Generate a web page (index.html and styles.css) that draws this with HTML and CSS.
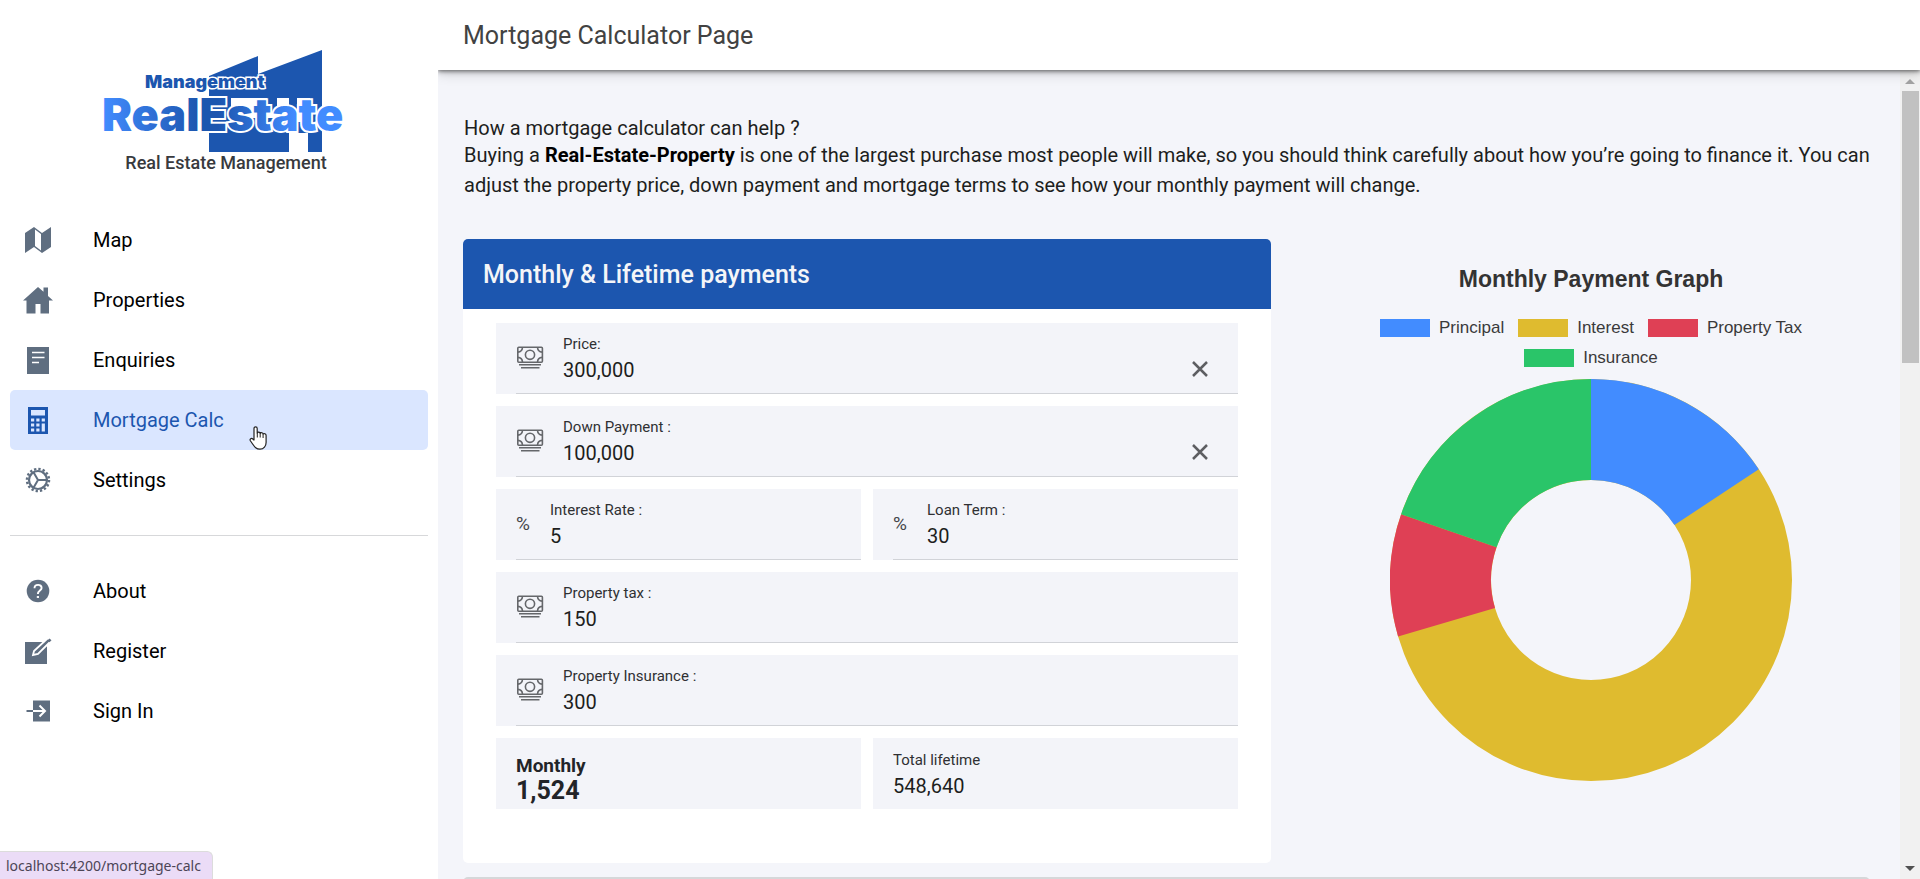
FILE: index.html
```
<!DOCTYPE html>
<html lang="en">
<head>
<meta charset="utf-8">
<title>Mortgage Calculator Page</title>
<link rel="stylesheet" href="styles.css">
</head>
<body>
<svg class="sprite" aria-hidden="true">
  <symbol id="cash" viewBox="0 0 28 24">
    <g fill="none" stroke="currentColor" stroke-width="1.6">
      <rect x="1.8" y="1.3" width="24.6" height="15" rx="1"/>
      <circle cx="14" cy="8.8" r="4.6"/>
      <path d="M6.5 1.5a5 5 0 0 1-4.7 4.6M21.500 1.500a5 5 0 0 0 4.700 4.600M6.500 16a5 5 0 0 0-4.700-4.600M21.500 16a5 5 0 0 1 4.700-4.600M3 18.800h22M5 21.700h18.500"/>
    </g>
  </symbol>
  <symbol id="close" viewBox="0 0 16 16"><path d="M1 1l14 14M15 1L1 15" fill="none" stroke="currentColor" stroke-width="2.500"/></symbol>
</svg>
<div class="app">
  <aside class="sidebar">
    <div class="brand">
      <svg class="logo" viewBox="0 0 250 106" role="img" aria-label="Management RealEstate">
        <defs>
          <linearGradient id="word" x1="0" x2="1"><stop offset="0" stop-color="#428cff"/><stop offset=".4" stop-color="#1c56af"/><stop offset=".48" stop-color="#1c56af"/><stop offset=".8" stop-color="#428cff"/></linearGradient>
        </defs>
        <path fill="#1c56af" d="M108 26L157 6v18L221 0v102h-14V83h-19v19h-80z"/>
        <path fill="#fff" d="M130 48h36v12h-36zM176 48h12v24h-12zM196 48h13v24h-13zM130 64h58v4h-58z"/>
        <text class="logo-small" x="44" y="38">Management</text>
        <text class="logo-big" x="1" y="81" fill="url(#word)">RealEstate</text>
      </svg>
      <p class="brand-name">Real Estate Management</p>
    </div>
    <nav class="nav">
      <a class="nav-item" href="#map"><svg class="nav-icon" viewBox="0 0 30 30"><path d="M2 8l9-6 8 6 9-6v20l-9 6-8-6-9 6z"/><path fill="#fff" d="M12 4.500l6 4.500v16.500L12 21z"/></svg>Map</a>
      <a class="nav-item" href="#properties"><svg class="nav-icon" viewBox="0 0 30 30"><path d="M15 2L0 15.500h3.500V28.500h9V19h5v9.500h8.500V15.500H30l-5-4.600V2.500h-4.500v4.200z"/></svg>Properties</a>
      <a class="nav-item" href="#enquiries"><svg class="nav-icon" viewBox="0 0 30 30"><path d="M4 2h22v27H4z"/><path stroke="#fff" stroke-width="1.700" d="M9 7.500h12.500M9 12.500h12.500M9 17.500h7"/></svg>Enquiries</a>
      <a class="nav-item active" href="#mortgage-calc" aria-current="page"><svg class="nav-icon" viewBox="0 0 30 30"><path d="M5 2h20v27H5z"/><g fill="#dae6ff"><path d="M8 5h14v5.500H8zM8 13.500h3.200v3H8zM13.300 13.500h3.200v3h-3.200zM18.700 13.500h3.200v3h-3.200zM8 18.500h3.200v3H8zM13.300 18.500h3.200v3h-3.200zM8 23.500h3.200v3H8zM13.300 23.500h3.200v3h-3.200zM18.700 18.500h3.200v8h-3.200z"/></g></svg>Mortgage Calc</a>
      <a class="nav-item" href="#settings"><svg class="nav-icon" viewBox="0 0 30 30"><g fill="none" stroke="currentColor"><circle cx="15" cy="15" r="11" stroke-width="2.500" stroke-dasharray="2.300 2.020"/><circle cx="15" cy="15" r="9" stroke-width="2.200"/><path stroke-width="2" d="M15 15h9M15 15l-4.500-7.800M15 15l-4.500 7.800"/></g></svg>Settings</a>
    </nav>
    <nav class="nav nav-account">
      <a class="nav-item" href="#about"><svg class="nav-icon" viewBox="0 0 30 30"><circle cx="15" cy="15" r="11.300"/><g fill="none" stroke="#fff" stroke-width="1.900"><path d="M11.500 12.200c0-4.500 7.200-4.300 7.100-.3 0 2.600-3.700 2.700-3.700 6"/><path d="M13.800 21h2.200"/></g></svg>About</a>
      <a class="nav-item" href="#register"><svg class="nav-icon" viewBox="0 0 30 30"><path d="M2 6h22v22H2z"/><path d="M10 19l1-4L25 2l3 3-13 13z" stroke="#fff" stroke-width="1.800"/><path d="M24.500 4.500l2-2 2 1.800-2 2z"/></svg>Register</a>
      <a class="nav-item" href="#sign-in"><svg class="nav-icon" viewBox="0 0 30 30"><path d="M10 4.500h17v21H10z"/><path d="M3.500 14h6.500v2H3.500z"/><path fill="none" stroke="#fff" stroke-width="2" d="M10 15h12M16.500 9.500L22 15l-5.500 5.500"/></svg>Sign In</a>
    </nav>
    <svg class="pointer" viewBox="0 0 18 24" aria-hidden="true"><path fill="#fff" stroke="#222" stroke-width="1.200" stroke-linejoin="round" d="M5 14V2.500c0-2.300 3.200-2.300 3.200 0V7c.5-1.200 2.800-1 3 .3.700-1 2.700-.6 2.900.6.900-.7 3-.2 3 1.500v7c0 3.500-2.300 6.800-6.100 6.800-4.500 0-5.500-2.700-9.500-8.200-1.300-2 1-3.500 2.500-1.800z"/><path stroke="#222" d="M8.300 7v4.500M11.200 7.500v4M14.100 8v4"/></svg>
  </aside>
  <div class="status">localhost:4200/mortgage-calc</div>

  <div class="page">
    <header class="topbar"><h1 class="topbar-title">Mortgage Calculator Page</h1></header>
    <div class="viewport">
      <main class="content">
        <section class="intro">
          <p class="intro-lead">How a mortgage calculator can help ?</p>
          <p class="intro-body">Buying a <strong>Real-Estate-Property</strong> is one of the largest purchase most people will make, so you should think carefully about how you’re going to finance it. You can adjust the property price, down payment and mortgage terms to see how your monthly payment will change.</p>
        </section>
        <div class="columns">
          <section class="card">
            <h2 class="card-title">Monthly &amp; Lifetime payments</h2>
            <form class="fields">
              <div class="field wide"><svg class="cash"><use href="#cash"/></svg><div class="control"><label for="price">Price:</label><input id="price" value="300,000"></div><button class="clear" type="button" aria-label="Clear price"><svg><use href="#close"/></svg></button></div>
              <div class="field wide"><svg class="cash"><use href="#cash"/></svg><div class="control"><label for="down">Down Payment :</label><input id="down" value="100,000"></div><button class="clear" type="button" aria-label="Clear down payment"><svg><use href="#close"/></svg></button></div>
              <div class="field"><span class="unit">%</span><div class="control"><label for="rate">Interest Rate :</label><input id="rate" value="5"></div></div>
              <div class="field"><span class="unit">%</span><div class="control"><label for="term">Loan Term :</label><input id="term" value="30"></div></div>
              <div class="field wide"><svg class="cash"><use href="#cash"/></svg><div class="control"><label for="tax">Property tax :</label><input id="tax" value="150"></div></div>
              <div class="field wide"><svg class="cash"><use href="#cash"/></svg><div class="control"><label for="insurance">Property Insurance :</label><input id="insurance" value="300"></div></div>
              <div class="field result monthly"><div class="control"><label for="monthly">Monthly</label><output id="monthly">1,524</output></div></div>
              <div class="field result"><div class="control"><label for="lifetime">Total lifetime</label><input id="lifetime" value="548,640" readonly></div></div>
            </form>
          </section>
          <section class="chart">
            <h2 class="chart-title">Monthly Payment Graph</h2>
            <ul class="legend">
              <li><span class="swatch principal"></span>Principal</li>
              <li><span class="swatch interest"></span>Interest</li>
              <li><span class="swatch tax"></span>Property Tax</li>
              <li><span class="swatch insurance"></span>Insurance</li>
            </ul>
            <svg class="donut" viewBox="-201 -201 402 402" role="img" aria-label="Monthly payment breakdown">
              <g fill="none" stroke-width="101">
                <circle class="slice-interest" r="150.500"/>
                <path class="slice-principal" d="M0-150.500A150.500 150.500 0 0 1 125.600-82.850"/>
                <path class="slice-tax" d="M-144.450 42.240A150.500 150.500 0 0 1-142.190-49.320"/>
                <path class="slice-insurance" d="M-142.190-49.320A150.500 150.500 0 0 1 0-150.500"/>
              </g>
            </svg>
          </section>
        </div>
        <section class="next-card"></section>
      </main>
      <div class="scrollbar" aria-hidden="true"><span class="arrow up"></span><span class="thumb"></span><span class="arrow down"></span></div>
    </div>
  </div>
</div>
</body>
</html>
```
FILE: styles.css
```
* { box-sizing: border-box; }
body { margin: 0; font-family: Roboto, "Liberation Sans", sans-serif; font-size: 20px; color: #1d1e20; background: #f4f5fa; }
h1, h2, p, ul { margin: 0; padding: 0; }
.sprite { display: none; }

.app { display: flex; height: 100vh; overflow: hidden; }

.sidebar { position: relative; flex: 0 0 438px; padding: 50px 10px 0; background: #fff; }
.brand { display: flex; flex-direction: column; align-items: center; height: 160px; padding-left: 14px; }
.logo { width: 250px; height: 106px; flex: none; overflow: visible; }
.logo-small { font: 900 18px Inter, sans-serif; fill: #1c56af; stroke: #fff; stroke-width: 3px; paint-order: stroke; }
.logo-big { font: 900 45px Inter, sans-serif; stroke: #fff; stroke-width: 4px; paint-order: stroke; }
.brand-name { font-size: 18px; line-height: 14px; font-weight: 500; color: #383a3e; }

.nav { display: flex; flex-direction: column; }
.nav-account { margin-top: 25px; padding-top: 25px; border-top: 1px solid #d7d8da; }
.nav-item { display: flex; align-items: center; gap: 40px; height: 60px; padding-left: 13px; border-radius: 5px; color: #000; text-decoration: none; }
.nav-item.active { background: #dae6ff; color: #1c56af; }
.nav-icon { width: 30px; height: 30px; fill: currentColor; color: #5f6e80; }
.active .nav-icon { color: #1c56af; }
.pointer { position: absolute; left: 249px; top: 426px; width: 18px; height: 24px; }
.status { position: fixed; left: 0; bottom: 0; padding: 0 11px 0 6px; border: 1px solid #dcdcdc; border-width: 1px 1px 0 0; border-radius: 0 6px 0 0; background: #ebdcf7; color: #4c4556; font: 14px/27px "Noto Sans", "Open Sans", sans-serif; }

.page { flex: 1; min-width: 0; display: flex; flex-direction: column; overflow: hidden; }
.topbar { z-index: 1; flex: 0 0 70px; display: flex; align-items: center; padding: 0 25px; background: #fff; box-shadow: 0 2px 5px rgba(0, 0, 0, .3), 0 4px 12px rgba(0, 0, 0, .14), 0 1px 3px rgba(0, 0, 0, .3); }
.topbar-title { font-size: 25px; font-weight: 400; color: #424242; }
.viewport { flex: 1; min-height: 0; display: flex; }
.content { flex: 1; min-width: 0; padding: 46px 30px 0 25px; overflow: hidden; }

.intro { margin-right: -5px; padding-left: 1px; line-height: 30px; }
.intro-lead { line-height: 24px; }
.intro strong { font-weight: 700; color: #000; }

.columns { display: grid; grid-template-columns: 808fr 599fr; margin-top: 39px; }
.card { border-radius: 5px; overflow: hidden; background: #fff; padding-bottom: 54px; }
.card-title { padding: 1px 20px 0; font-size: 25px; line-height: 69px; font-weight: 500; color: #f4f5f8; background: #1c56af; }
.fields { display: grid; grid-template-columns: 1fr 1fr; gap: 12px; padding: 14px 33px 0; }
.field { display: flex; height: 71px; padding-left: 20px; background: linear-gradient(#d1d3d8, #d1d3d8) 20px 100% / 100% 1px no-repeat #f3f4f9; }
.field.wide { grid-column: 1 / -1; }
.field.result { background: #f3f4f9; }
.cash { width: 28px; height: 24px; margin: 23px 19px 0 0; color: #65676b; }
.unit { margin: 23px 19px 0 0; width: 15px; font-size: 19px; line-height: 24px; color: #45464a; }
.control { flex: 1; min-width: 0; display: flex; flex-direction: column; padding-top: 11px; }
.control label { font-size: 15px; line-height: 20px; color: #2f3033; }
.control input { width: 100%; height: 32px; padding: 0; border: 0; outline: 0; background: none; font: inherit; color: inherit; }
.result .control { padding-top: 12px; }
.monthly .control { padding-top: 15px; font-weight: 700; color: #222428; }
.monthly label { font-size: 19px; line-height: 25px; color: inherit; }
.monthly output { font-size: 25px; line-height: 25px; }
.clear { align-self: flex-start; display: flex; margin: 38px 30px 0 0; padding: 0; border: 0; background: none; color: #5d5e62; }
.clear svg { width: 16px; height: 16px; }

.chart { display: flex; flex-direction: column; align-items: center; padding: 24px 20px 0; font-family: "Liberation Sans", Arial, sans-serif; color: #3a3a3a; }
.chart-title { padding-left: 41px; font-size: 23px; line-height: 32px; color: #333; }
.legend { display: flex; flex-wrap: wrap; justify-content: center; gap: 0 14px; width: 450px; margin: 18px 0 0 41px; list-style: none; font-size: 17px; line-height: 30px; }
.legend li { display: flex; align-items: center; gap: 9px; }
.swatch { width: 50px; height: 18px; }
.principal { background: #428cff; }
.interest { background: #dfbb2f; }
.tax { background: #df4055; }
.insurance { background: #2ac569; }
.donut { width: 402px; height: 402px; margin: 6px 0 0 41px; }
.slice-principal { stroke: #428cff; }
.slice-interest { stroke: #dfbb2f; }
.slice-tax { stroke: #df4055; }
.slice-insurance { stroke: #2ac569; }

.next-card { height: 300px; margin-top: 14px; border-radius: 5px; background: #d5d7d9; }

.scrollbar { flex: 0 0 20px; display: flex; flex-direction: column; align-items: center; padding: 8px 0; background: #f1f1f1; }
.arrow { border: 5px solid transparent; }
.arrow.up { border-top: 0; border-bottom-color: #a3a3a3; margin-top: 1px; }
.arrow.down { border-bottom: 0; border-top-color: #505050; margin-top: auto; }
.thumb { width: 17px; height: 272px; margin-top: 7px; background: #c1c1c1; }
```
